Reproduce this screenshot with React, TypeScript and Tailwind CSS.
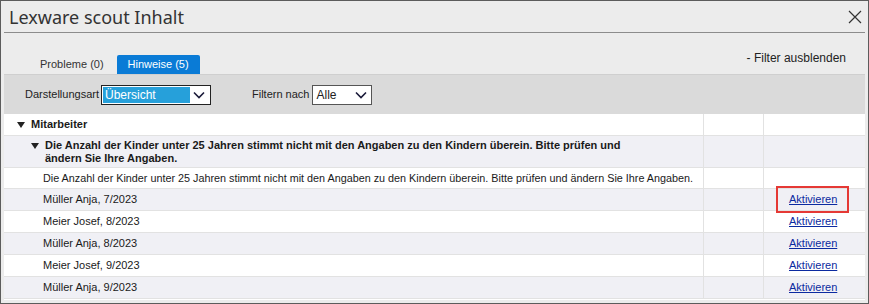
import React from "react";

const Tri = () => (
  <svg width="8" height="6" viewBox="0 0 8 6" className="shrink-0">
    <path d="M0 0 H8 L4 6 Z" fill="#222" />
  </svg>
);

const Chevron = () => (
  <svg width="12" height="8" viewBox="0 0 12 8">
    <path d="M1 1.5 L6 6.5 L11 1.5" fill="none" stroke="#1b1b3a" strokeWidth="1.6" />
  </svg>
);

const names = [
  "Müller Anja, 7/2023",
  "Meier Josef, 8/2023",
  "Müller Anja, 8/2023",
  "Meier Josef, 9/2023",
  "Müller Anja, 9/2023",
];

export default function App() {
  return (
    <div
      className="w-[869px] h-[304px] bg-[#ececec] border border-[#5c5c5c] flex flex-col overflow-hidden text-[#1a1a1a]"
      style={{ fontFamily: "'Liberation Sans', Arial, sans-serif" }}
    >
      {/* Title bar */}
      <div className="h-[31px] flex items-center justify-between pl-[8px] pr-[6px]">
        <span
          className="text-[18px] text-[#333] leading-none"
          style={{ fontFamily: "'Noto Sans', sans-serif" }}
        >
          Lexware scout Inhalt
        </span>
        <svg width="14" height="14" viewBox="0 0 14 14">
          <path d="M1 1 L13 13 M13 1 L1 13" stroke="#333" strokeWidth="1.2" />
        </svg>
      </div>
      <div className="mx-[3px] h-px bg-[#8c8c8c]" />

      {/* Tabs */}
      <div className="h-[41px] flex items-end justify-between pl-[39px] pr-[22px]">
        <div className="flex items-end text-[11px]">
          <div className="h-[19px] flex items-center text-[#333]">Probleme (0)</div>
          <div className="h-[19px] w-[83px] ml-[13px] flex items-center justify-center bg-[#0a7bd6] text-white rounded-t-[2px]">
            Hinweise (5)
          </div>
        </div>
        <div className="h-[32px] text-[12px] text-[#222] flex items-center">
          - Filter ausblenden
        </div>
      </div>

      {/* Filter bar */}
      <div className="mx-[3px] h-[40px] bg-[#dadada] border-t border-[#cfcfcf] flex items-center pl-[21px] text-[11px] text-[#222]">
        <span>Darstellungsart</span>
        <div className="ml-[2px] w-[110px] h-[20px] bg-white border border-[#222] flex items-center p-[1px]">
          <div className="flex-1 h-full bg-[#26a0da] text-white text-[12px] flex items-center pl-[2px] leading-none">Übersicht</div>
          <div className="w-[19px] flex items-center justify-center"><Chevron /></div>
        </div>
        <span className="ml-[41px]">Filtern nach</span>
        <div className="ml-[3px] w-[60px] h-[20px] bg-white border border-[#555] flex items-center justify-between pl-[3px] pr-[4px] leading-none text-[12px]">
          <span>Alle</span>
          <Chevron />
        </div>
      </div>

      {/* Table */}
      <div className="mx-[3px] flex-1 bg-white text-[11px]">
        {/* Mitarbeiter row */}
        <div className="h-[22px] flex border-b border-[#e2e2e2] bg-white">
          <div className="w-[700px] border-r border-[#e2e2e2] flex items-center pl-[13px] gap-[6px] font-bold">
            <Tri />
            <span>Mitarbeiter</span>
          </div>
          <div className="w-[60px] border-r border-[#e2e2e2]" />
          <div className="flex-1" />
        </div>
        {/* Group header */}
        <div className="h-[32px] flex border-b border-[#e2e2e2] bg-[#f0f0f5]">
          <div className="w-[700px] border-r border-[#e2e2e2] flex items-start pl-[27px] pt-[3px] gap-[6px] font-bold">
            <div className="pt-[4px]"><Tri /></div>
            <span className="leading-[13px]">
              Die Anzahl der Kinder unter 25 Jahren stimmt nicht mit den Angaben zu den Kindern überein. Bitte prüfen und
              <br />
              ändern Sie Ihre Angaben.
            </span>
          </div>
          <div className="w-[60px] border-r border-[#e2e2e2]" />
          <div className="flex-1" />
        </div>
        {/* Description */}
        <div className="h-[21px] flex border-b border-[#e2e2e2] bg-white">
          <div className="w-[700px] border-r border-[#e2e2e2] flex items-center pl-[39px] whitespace-nowrap text-[10.8px]">
            Die Anzahl der Kinder unter 25 Jahren stimmt nicht mit den Angaben zu den Kindern überein. Bitte prüfen und ändern Sie Ihre Angaben.
          </div>
          <div className="w-[60px] border-r border-[#e2e2e2]" />
          <div className="flex-1" />
        </div>
        {names.map((n, i) => (
          <div
            key={i}
            className={`h-[22px] flex border-b border-[#e2e2e2] ${i % 2 === 0 ? "bg-[#f0f0f5]" : "bg-white"}`}
          >
            <div className="w-[700px] border-r border-[#e2e2e2] flex items-center pl-[39px]">{n}</div>
            <div className="w-[60px] border-r border-[#e2e2e2]" />
            <div className="flex-1 flex items-center pl-[25px] relative">
              <span className="text-[#0b2aa0] underline">Aktivieren</span>
              {i === 0 && (
                <div className="absolute left-[12px] top-[-3px] w-[73px] h-[27px] border-2 border-[#e53935]" />
              )}
            </div>
          </div>
        ))}
      </div>
      <div className="h-[3px]" />
    </div>
  );
}
